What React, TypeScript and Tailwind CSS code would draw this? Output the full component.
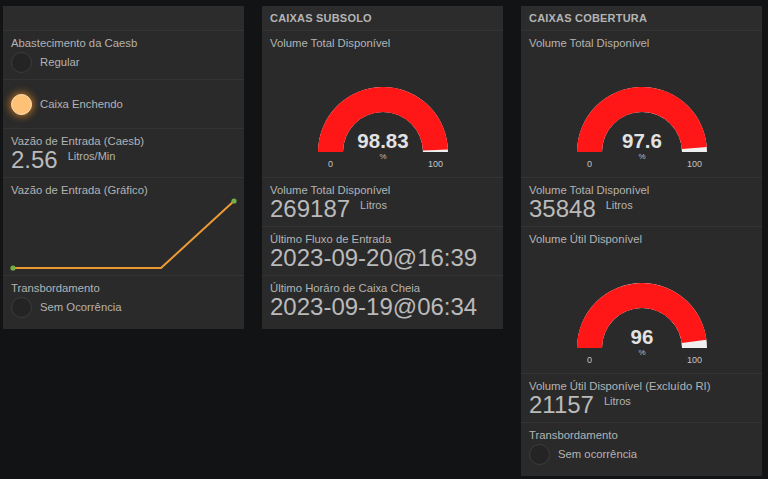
import React from "react";

function Gauge({ value, display }: { value: number; display: string }) {
  const cx = 80;
  const cy = 81;
  const Ro = 65;
  const Ri = 40;
  const a = (1 - value / 100) * Math.PI;
  const Xo = cx + Ro * Math.cos(a);
  const Yo = cy - Ro * Math.sin(a);
  const Xi = cx + Ri * Math.cos(a);
  const Yi = cy - Ri * Math.sin(a);
  const bg = `M${cx - Ri},${cy} L${cx - Ro},${cy} A${Ro},${Ro} 0 0 1 ${cx + Ro},${cy} L${cx + Ri},${cy} A${Ri},${Ri} 0 0 0 ${cx - Ri},${cy} Z`;
  const lvl = `M${cx - Ri},${cy} L${cx - Ro},${cy} A${Ro},${Ro} 0 0 1 ${Xo},${Yo} L${Xi},${Yi} A${Ri},${Ri} 0 0 0 ${cx - Ri},${cy} Z`;
  return (
    <svg width="160" height="100" viewBox="0 0 160 100" className="self-center mt-[21px]">
      <path d={bg} fill="#efefef" />
      <path d={lvl} fill="#ff1616" />
      <text x={cx} y={cy - 4} textAnchor="middle" fontFamily="Liberation Sans, Arial, sans-serif" fontWeight="bold" fontSize="20.5" fill="#e2e2e2">
        {display}
      </text>
      <text x={cx} y={cy + 7} textAnchor="middle" fontFamily="Liberation Sans, Arial, sans-serif" fontSize="8" fill="#bdbdbd">
        %
      </text>
      <text x={cx - 52.5} y={cy + 15} textAnchor="middle" fontFamily="Liberation Sans, Arial, sans-serif" fontSize="9" fill="#c4c4c4">
        0
      </text>
      <text x={cx + 52.5} y={cy + 15} textAnchor="middle" fontFamily="Liberation Sans, Arial, sans-serif" fontSize="9" fill="#c4c4c4">
        100
      </text>
    </svg>
  );
}

function Header({ title }: { title?: string }) {
  return (
    <div className="h-[24px] flex items-center px-2 bg-[#2c2c2c]">
      <span className="text-[11px] font-bold text-[#b4b4b4] tracking-[0.2px] leading-none">{title}</span>
    </div>
  );
}

function Label({ children }: { children: React.ReactNode }) {
  return <div className="px-2 pt-[5px] text-[11.3px] leading-[14px] text-[#b3b3b3] whitespace-nowrap">{children}</div>;
}

function Led({ on }: { on?: boolean }) {
  return on ? (
    <div className="w-[21px] h-[21px] rounded-full bg-[#ffc175] border border-[#ffe3bd] shadow-[0_0_7px_2px_rgba(255,150,30,0.55)] shrink-0" />
  ) : (
    <div className="w-[21px] h-[21px] rounded-full bg-[#242424] border-[1.5px] border-[#3d3d3d] shrink-0" />
  );
}

function LedRow({ label, text, on }: { label?: string; text: string; on?: boolean }) {
  if (!label) {
    return (
      <div className="h-[49px] border-t border-[#343434] flex items-center px-2 gap-[8px]">
        <Led on={on} />
        <span className="text-[11.3px] text-[#b3b3b3]">{text}</span>
      </div>
    );
  }
  return (
    <div className="h-[49px] border-t border-[#343434] flex flex-col">
      <Label>{label}</Label>
      <div className="flex items-center px-2 gap-[8px] mt-[2px]">
        <Led on={on} />
        <span className="text-[11.3px] text-[#b3b3b3]">{text}</span>
      </div>
    </div>
  );
}

function ValueRow({ label, value, unit }: { label: string; value: string; unit?: string }) {
  return (
    <div className="h-[49px] border-t border-[#343434] flex flex-col">
      <Label>{label}</Label>
      <div className="flex items-start px-2 gap-[10px]">
        <span className="text-[24px] leading-[24px] text-[#bababa] whitespace-nowrap">{value}</span>
        {unit && <span className="text-[11px] leading-[14px] mt-[1px] text-[#b3b3b3]">{unit}</span>}
      </div>
    </div>
  );
}

function GaugeRow({ label, value, display }: { label: string; value: number; display: string }) {
  return (
    <div className="h-[147px] border-t border-[#343434] flex flex-col">
      <Label>{label}</Label>
      <Gauge value={value} display={display} />
    </div>
  );
}

function ChartRow() {
  return (
    <div className="h-[98px] border-t border-[#343434] flex flex-col">
      <Label>Vazão de Entrada (Gráfico)</Label>
      <svg width="241" height="77" viewBox="0 0 241 77">
        <polyline points="10,71 158,71 231,4" fill="none" stroke="#ec9a34" strokeWidth="2" strokeLinejoin="round" />
        <circle cx="10" cy="71" r="2.6" fill="#74b043" />
        <circle cx="231" cy="4" r="2.6" fill="#74b043" />
      </svg>
    </div>
  );
}

export default function App() {
  return (
    <div className="w-[768px] h-[479px] bg-[#111315] font-['Liberation_Sans',Arial,sans-serif] overflow-hidden">
      <div className="flex items-start gap-[18px] pl-[3px] pt-[6px]">
        <div className="w-[241px] bg-[#2a2a2a] pb-[5px]">
          <Header />
          <LedRow label="Abastecimento da Caesb" text="Regular" />
          <LedRow text="Caixa Enchendo" on />
          <ValueRow label="Vazão de Entrada (Caesb)" value="2.56" unit="Litros/Min" />
          <ChartRow />
          <LedRow label="Transbordamento" text="Sem Ocorrência" />
        </div>
        <div className="w-[241px] bg-[#2a2a2a] pb-[5px]">
          <Header title="CAIXAS SUBSOLO" />
          <GaugeRow label="Volume Total Disponível" value={98.83} display="98.83" />
          <ValueRow label="Volume Total Disponível" value="269187" unit="Litros" />
          <ValueRow label="Último Fluxo de Entrada" value="2023-09-20@16:39" />
          <ValueRow label="Último Horáro de Caixa Cheia" value="2023-09-19@06:34" />
        </div>
        <div className="w-[241px] bg-[#2a2a2a] pb-[5px]">
          <Header title="CAIXAS COBERTURA" />
          <GaugeRow label="Volume Total Disponível" value={97.6} display="97.6" />
          <ValueRow label="Volume Total Disponível" value="35848" unit="Litros" />
          <GaugeRow label="Volume Útil Disponível" value={96} display="96" />
          <ValueRow label="Volume Útil Disponível (Excluído RI)" value="21157" unit="Litros" />
          <LedRow label="Transbordamento" text="Sem ocorrência" />
        </div>
      </div>
    </div>
  );
}
